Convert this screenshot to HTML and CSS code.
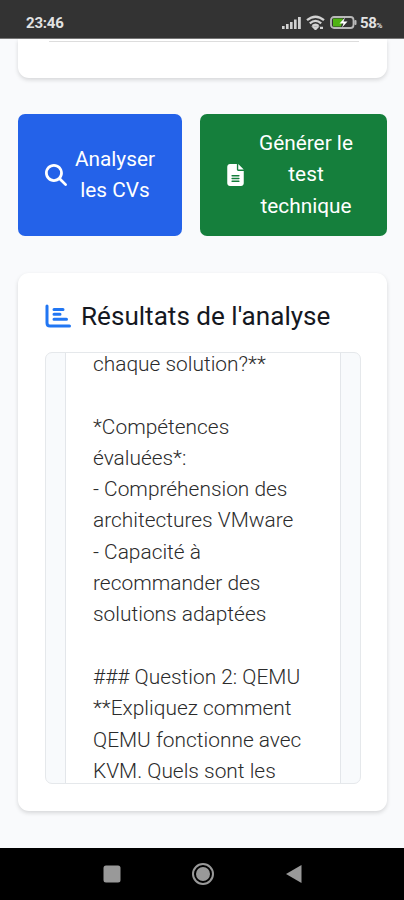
FILE: index.html
```html
<!DOCTYPE html>
<html lang="fr">
<head>
    <meta charset="UTF-8">
    <meta name="viewport" content="width=device-width, initial-scale=1.0">
    <title>Analyse de CVs</title>
    <link rel="stylesheet" href="styles.css">
</head>
<body>

    <div class="statusBar">
        <span class="clock">23:46</span>
        <div class="statusIcons">
            <svg width="20" height="14" viewBox="0 0 20 14" fill="#d2d2d2">
                <rect x="0" y="10" width="2.6" height="3" />
                <rect x="4" y="8" width="2.6" height="5" />
                <rect x="8" y="6" width="2.6" height="7" />
                <rect x="12" y="3.5" width="2.6" height="9.5" />
                <rect x="16" y="1" width="2.8" height="12" />
            </svg>
            <svg class="wifi" width="19" height="15" viewBox="0 0 19 15" fill="none" stroke="#d2d2d2" stroke-width="2.300">
                <path d="M1 5.2Q9.500-1.800 18 5.200" />
                <path d="M3.800 8.300Q9.500 3.500 15.200 8.300" />
                <path d="M6.500 11Q9.500 8.500 12.500 11" />
                <path d="M8 12.500h3l-1.500 1.500zM14 12.800h3" />
            </svg>
            <svg class="battery" width="27" height="13" viewBox="0 0 27 13">
                <rect x="1" y="1" width="22.500" height="11" rx="3" fill="#333" stroke="#b9b9b9" stroke-width="1.800" />
                <path d="M3 2.500h10l-2 8H3z" fill="#4fb313" />
                <path d="M15 1.500L9.500 7.500h4L12 11.500l5.500-6h-4z" fill="#fff" />
                <rect x="24.300" y="4" width="2.200" height="5" rx="1" fill="#b9b9b9" />
            </svg>
            <span class="percent">58<small>%</small></span>
        </div>
    </div>

    <div class="page">
        <div class="card uploadCard">
            <div class="uploadField"></div>
        </div>

        <div class="actions">
            <button class="analyseButton">
                <svg width="22" height="22" viewBox="0 0 512 512" fill="#fff">
                    <path d="M416 208c0 45.900-14.900 88.300-40 122.700L502.600 457.400c12.500 12.500 12.500 32.800 0 45.300s-32.800 12.500-45.300 0L330.700 376c-34.400 25.200-76.800 40-122.700 40C93.100 416 0 322.900 0 208S93.100 0 208 0S416 93.100 416 208zM208 352a144 144 0 1 0 0-288 144 144 0 1 0 0 288z" />
                </svg>
                <span>Analyser<br>les CVs</span>
            </button>
            <button class="testButton">
                <svg width="17" height="22" viewBox="0 0 384 512" fill="#fff">
                    <path d="M64 0C28.700 0 0 28.700 0 64V448c0 35.300 28.700 64 64 64H320c35.300 0 64-28.700 64-64V160H256c-17.700 0-32-14.300-32-32V0H64zM256 0V128H384L256 0zM112 256H272c8.800 0 16 7.200 16 16s-7.200 16-16 16H112c-8.800 0-16-7.200-16-16s7.200-16 16-16zm0 64H272c8.800 0 16 7.200 16 16s-7.200 16-16 16H112c-8.800 0-16-7.200-16-16s7.200-16 16-16zm0 64H272c8.800 0 16 7.200 16 16s-7.200 16-16 16H112c-8.800 0-16-7.200-16-16s7.200-16 16-16z" />
                </svg>
                <span>Générer le<br>test<br>technique</span>
            </button>
        </div>

        <div class="card resultCard">
            <h2>
                <svg width="27" height="24" viewBox="0 0 27 24" fill="none" stroke="#2176f3" stroke-width="3" stroke-linecap="round" stroke-linejoin="round">
                    <path d="M2 2V19Q2 22 5 22H24.500" />
                    <path d="M9 5.500H18M9 10.300H15M9 15.200H21.500" />
                </svg>
                Résultats de l'analyse
            </h2>
            <div class="resultBox">
                <div class="resultText">chaque solution?**

*Compétences
évaluées*:
- Compréhension des
architectures VMware
- Capacité à
recommander des
solutions adaptées

### Question 2: QEMU
**Expliquez comment
QEMU fonctionne avec
KVM. Quels sont les</div>
            </div>
        </div>
    </div>

    <!-- Android navigation -->
    <div class="navBar">
        <svg width="18" height="18" viewBox="0 0 18 18"><rect x="0.500" y="0.500" width="17" height="17" rx="2.500" fill="#999" /></svg>
        <svg width="24" height="24" viewBox="0 0 24 24">
            <circle cx="12" cy="12" r="10" fill="none" stroke="#999" stroke-width="2" />
            <circle cx="12" cy="12" r="7" fill="#999" />
        </svg>
        <svg width="18" height="20" viewBox="0 0 18 20"><path d="M1 10L16.500 1V19z" fill="#999" /></svg>
    </div>

</body>
</html>
```
FILE: styles.css
```css
* {
    box-sizing: border-box;
}

body {
    display: flex;
    flex-direction: column;
    height: 900px;
    margin: 0;
    overflow: hidden;
    background-color: #f9fafc;
    font-family: Roboto, sans-serif;
}

svg {
    display: block;
    flex-shrink: 0;
}

.statusBar {
    display: flex;
    align-items: center;
    justify-content: space-between;
    height: 39px;
    padding: 7px 22px 0 26px;
    background-color: #333;
    border-bottom: 1px solid #777;
    color: #e2e2e2;
    flex-shrink: 0;
}

.clock {
    font-size: 15px;
    font-weight: bold;
    letter-spacing: -0.2px;
}

.statusIcons {
    display: flex;
    align-items: center;
}

.wifi {
    margin-left: 4px;
}

.battery {
    margin-left: 5px;
}

.percent {
    margin-left: 3px;
    font-size: 15px;
    font-weight: bold;
    letter-spacing: -0.4px;
}

.percent small {
    font-size: 8px;
}

.page {
    flex: 1;
    padding: 0 17px 0 18px;
}

.card {
    background-color: #fff;
    border-radius: 11px;
    box-shadow: 0 2px 4px rgba(0, 0, 0, 0.14);
}

.uploadCard {
    height: 39px;
    padding: 0 28px 0 31px;
    border-radius: 0 0 11px 11px;
}

.uploadField {
    height: 3px;
    border-bottom: 1px solid #ddd;
}

.actions {
    display: grid;
    grid-template-columns: 164px 187px;
    gap: 18px;
    margin-top: 36px;
}

.actions button {
    display: flex;
    align-items: center;
    height: 122px;
    padding: 0 25px 0 27px;
    border: none;
    border-radius: 7px;
    color: #fff;
    font-family: inherit;
    font-size: 20.8px;
    line-height: 31.4px;
    text-align: center;
}

.actions button span {
    flex: 1;
}

.actions .analyseButton {
    gap: 6px;
    background-color: #2462e9;
}

.actions .testButton {
    gap: 6px;
    background-color: #157f3c;
}

.resultCard {
    height: 538px;
    margin-top: 37px;
    padding: 27px 26px 0 27px;
}

h2 {
    display: flex;
    align-items: center;
    gap: 9px;
    height: 32px;
    margin: 0 0 20px;
    color: #15181f;
    font-size: 26.1px;
    font-weight: normal;
    white-space: nowrap;
}

.resultBox {
    height: 432px;
    padding: 0 19px;
    overflow: hidden;
    background-color: #f8fafc;
    border: 1px solid #e5e8eb;
    border-radius: 7px;
}

.resultText {
    height: 460px;
    margin-top: -5px;
    padding-left: 27px;
    background-color: #fff;
    border: 1px solid #e3e6ea;
    color: #2b2b2b;
    font-size: 20.9px;
    font-weight: 300;
    line-height: 31.3px;
    white-space: pre;
}

.navBar {
    display: flex;
    align-items: center;
    justify-content: center;
    gap: 70px;
    height: 52px;
    padding-left: 1px;
    background-color: #000;
    flex-shrink: 0;
}
```
